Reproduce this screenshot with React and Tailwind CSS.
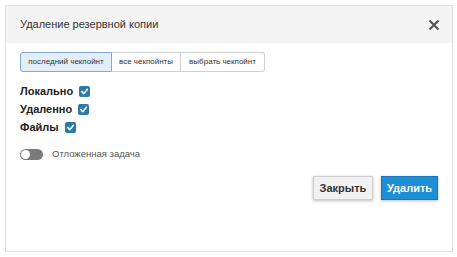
import React from "react";

function Check() {
  return (
    <span className="inline-flex h-[11px] w-[11px] items-center justify-center rounded-[2px] bg-[#2b7ba8]">
      <svg width="9" height="9" viewBox="0 0 10 10">
        <path d="M2 5.2 L4.2 7.4 L8.2 2.6" fill="none" stroke="white" strokeWidth="1.8" strokeLinecap="round" strokeLinejoin="round" />
      </svg>
    </span>
  );
}

export default function App() {
  return (
    <div className="h-[257px] w-[457px] bg-white" style={{ fontFamily: '"Liberation Sans", Arial, sans-serif' }}>
      <div className="pt-[5px] pl-[5px] pr-[4px]">
        <div className="flex h-[247px] flex-col border border-[#e2e2e2] bg-white">
          <div className="flex h-[37px] items-center justify-between bg-[#f4f4f4] pl-[14px] pr-[12px]">
            <span className="text-[11px] text-[#333]">Удаление резервной копии</span>
            <svg width="12" height="12" viewBox="0 0 12 12">
              <path d="M1.5 1.5 L10.5 10.5 M10.5 1.5 L1.5 10.5" stroke="#555" strokeWidth="2.2" strokeLinecap="butt" />
            </svg>
          </div>
          <div className="px-[14px] pt-[9px]">
            <div className="flex w-fit text-[8px] text-[#333]">
              <div className="flex h-[20px] w-[92px] items-center justify-center rounded-l-[3px] border border-[#7fa9d6] bg-[#e4eef9]">последний чекпойнт</div>
              <div className="flex h-[20px] w-[69px] items-center justify-center border-y border-r border-[#d0d0d0]">все чекпойнты</div>
              <div className="flex h-[20px] w-[84px] items-center justify-center rounded-r-[3px] border-y border-r border-[#d0d0d0]">выбрать чекпойнт</div>
            </div>
            <div className="mt-[13px] flex flex-col gap-[5px] text-[11px] font-bold text-[#222]">
              <div className="flex h-[13px] items-center gap-[6px]"><span>Локально</span><Check /></div>
              <div className="flex h-[13px] items-center gap-[6px]"><span>Удаленно</span><Check /></div>
              <div className="flex h-[13px] items-center gap-[6px]"><span>Файлы</span><Check /></div>
            </div>
            <div className="mt-[14px] flex h-[12px] items-center gap-[9px]">
              <span className="relative inline-block h-[11px] w-[23px] rounded-full bg-[#7b7b7b]">
                <span className="absolute left-[1px] top-[1px] h-[9px] w-[9px] rounded-full bg-white" />
              </span>
              <span className="text-[9.5px] text-[#555]">Отложенная задача</span>
            </div>
            <div className="mt-[16px] flex justify-end gap-[8px]">
              <button className="flex h-[24px] w-[60px] items-center justify-center border border-[#cfcfcf] bg-[#f2f2f2] text-[11px] font-bold text-[#333] shadow-[0_1px_3px_rgba(0,0,0,0.25)]">Закрыть</button>
              <button className="flex h-[24px] w-[57px] items-center justify-center border border-[#1778b8] bg-[#1d8fd6] text-[11px] font-bold text-white shadow-[0_1px_3px_rgba(0,0,0,0.25)]">Удалить</button>
            </div>
          </div>
        </div>
      </div>
    </div>
  );
}
